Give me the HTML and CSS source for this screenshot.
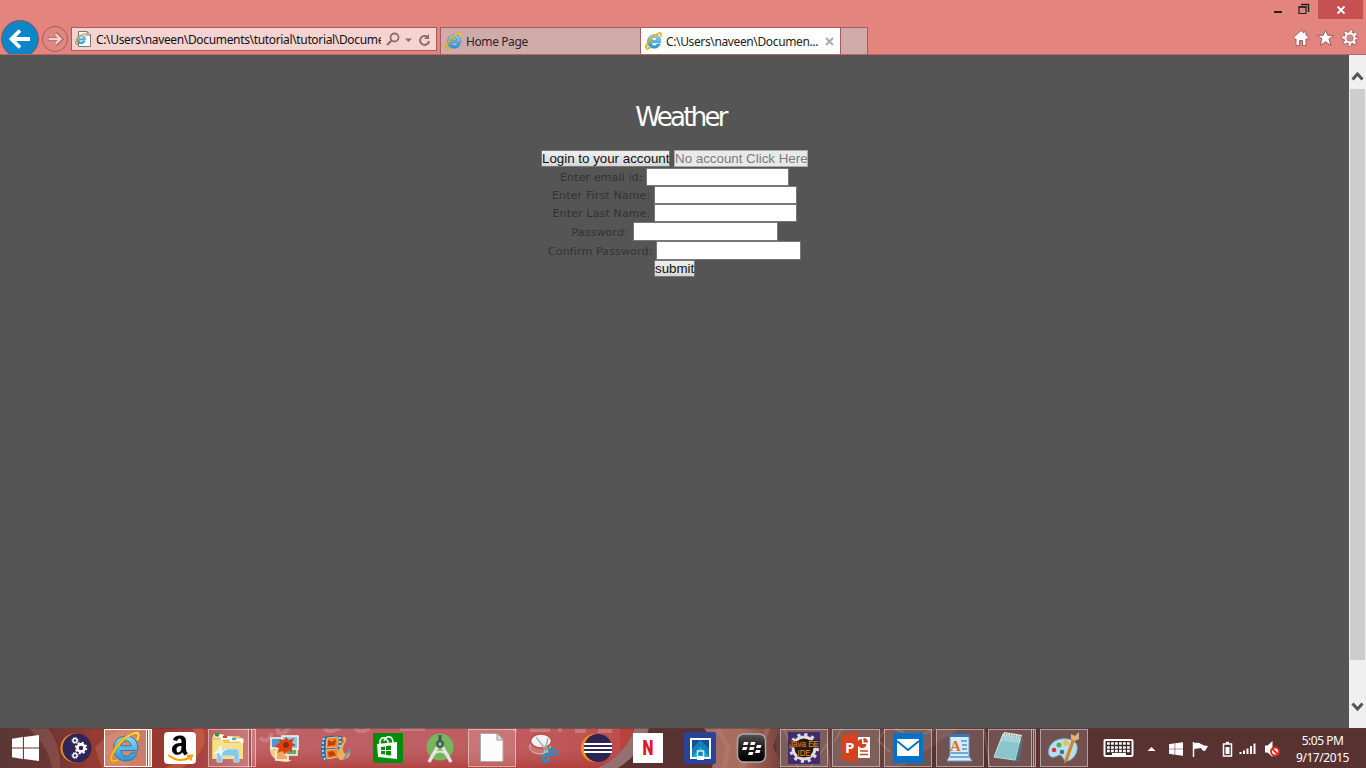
FILE: index.html
```html
<!DOCTYPE html>
<html lang="en">
<head>
<meta charset="utf-8">
<title>Weather</title>
<link rel="stylesheet" href="styles.css">
</head>
<body>
<svg class="defs" width="0" height="0" aria-hidden="true">
  <defs>
    <linearGradient id="blue" x1="0" y1="0" x2="0" y2="1"><stop offset="0" stop-color="#8fdcfa"/><stop offset="1" stop-color="#2196d8"/></linearGradient>
    <linearGradient id="yellow" x1="0" y1="0" x2="1" y2="0"><stop offset="0" stop-color="#f5b80c"/><stop offset="1" stop-color="#fbdc52"/></linearGradient>
    <symbol id="ie" viewBox="0 0 32 32">
      <path d="M27 21.500C25.500 26 22 29 16.500 29C9.500 29 4.500 24 4.500 17S9.500 5 16.500 5S28 10 28 17V19H11.500C12 22.500 14 24.500 17 24.500C19 24.500 20.500 23.500 21.300 21.500ZM11.500 14.500H21.500C21 11 19.300 9.500 16.500 9.500S12 11 11.500 14.500Z" fill="url(#blue)" stroke="#2177ac" stroke-width=".9" fill-rule="evenodd"/>
      <path d="M27 9C30 4 29 1 24.500 2.200C15 5 6 15 2.500 24C1 29.500 4 31 8.500 28" fill="none" stroke="#b98312" stroke-width="3"/>
      <path d="M27 9C30 4 29 1 24.500 2.200C15 5 6 15 2.500 24C1 29.500 4 31 8.500 28" fill="none" stroke="url(#yellow)" stroke-width="2.200"/>
    </symbol>
    <symbol id="win" viewBox="0 0 26 25"><path d="M0 3.500L10.500 2V12H0ZM11.500 1.800L26 0V12H11.500ZM0 13H10.500V23L0 21.500ZM11.500 13H26V25L11.500 23.200Z" fill="#fff"/></symbol>
  </defs>
</svg>

<header class="chrome">
  <div class="caption">
    <svg class="min" width="10" height="14"><path d="M1 12H9" stroke="#222" stroke-width="2"/></svg>
    <svg class="restore" width="12" height="12"><path d="M1 4H8V10.500H1Z" fill="none" stroke="#222" stroke-width="1.200"/><path d="M.5 4H8.500M3 1.500H10.500V9" fill="none" stroke="#222" stroke-width="1.500"/></svg>
    <span class="close"><svg width="10" height="10"><path d="M1.500 1.500L8.500 8.500M8.500 1.500L1.500 8.500" stroke="#fff" stroke-width="1.800"/></svg></span>
  </div>
  <nav class="toolbar">
    <svg class="nav" width="71" height="34">
      <circle cx="20" cy="19" r="18.500" fill="#0b87c9" stroke="#92514f"/>
      <path d="M30 19H12M20 10.500L11.500 19L20 27.500" fill="none" stroke="#fff" stroke-width="3.800"/>
      <circle cx="55" cy="19" r="12.500" fill="#e08781" stroke="#a75c5a"/>
      <path d="M48 19H60M55.500 13.500L61 19L55.500 24.500" fill="none" stroke="#a75c5a" stroke-width="4"/>
      <path d="M48.500 19H60M55.500 14L60.500 19L55.500 24" fill="none" stroke="#f5cfcc" stroke-width="2.400"/>
    </svg>
    <div class="address">
      <svg width="17" height="18"><path d="M3.500 1.500H12L15.500 5V16.500H3.500Z" fill="#fff" stroke="#777"/><path d="M12 1.500V5H15.500" fill="none" stroke="#777"/><use href="#ie" x="0" y="3" width="12" height="12"/></svg>
      <span class="url">C:\Users\naveen\Documents\tutorial\tutorial\Docume</span>
      <svg class="tools" width="50" height="22"><g fill="none" stroke="#8a6f6e"><circle cx="8.500" cy="8.500" r="4" stroke-width="1.800"/><path d="M5.500 11.500L1 16" stroke-width="2.200"/><path d="M41.500 8A4.500 4.500 0 1 0 43 12" stroke-width="2"/></g><path d="M19 9.500H26L22.500 13ZM43 5V10H38Z" fill="#8a6f6e"/></svg>
    </div>
    <div class="tabs">
      <div class="tab"><svg width="18" height="18"><use href="#ie" width="18" height="18"/></svg><span class="tab-home">Home Page</span></div>
      <div class="tab active"><svg width="18" height="18"><use href="#ie" width="18" height="18"/></svg><span class="tab-path">C:\Users\naveen\Documen...</span><svg class="x" width="9" height="9"><path d="M1 1L8 8M8 1L1 8" stroke="#aaa" stroke-width="2"/></svg></div>
      <div class="new-tab"></div>
    </div>
    <svg class="actions" width="73" height="24">
      <g stroke="#99605f" stroke-width="1" fill="#fff">
        <path d="M8 4.500L11 7V5H13V9L15.500 11.500L14.500 13H13V19.500H9.500V14.500H6.500V19.500H3V13H1.500L.5 11.500Z"/>
        <path d="M32.500 4L34.800 9.300H40.800L36 13L38 19.500L32.500 15.800L27 19.500L29 13L24.200 9.300H30.200Z"/>
      </g>
      <g fill="none"><circle cx="57" cy="12" r="6.500" stroke="#99605f" stroke-width="4" stroke-dasharray="3.100 2.005" stroke-dashoffset="1.550"/><circle cx="57" cy="12" r="5" stroke="#99605f" stroke-width="4"/><circle cx="57" cy="12" r="6.500" stroke="#fff" stroke-width="2.400" stroke-dasharray="2.300 2.805" stroke-dashoffset="1.150"/><circle cx="57" cy="12" r="4.600" stroke="#fff" stroke-width="2.200"/></g>
    </svg>
  </nav>
</header>

<div class="viewport">
  <main>
    <h1>Weather</h1>
    <form>
      <div class="row links"><button type="button" class="login">Login to your account</button><button type="button" class="signup">No account Click Here</button></div>
      <div class="row email"><label for="email">Enter email id:</label><input id="email"></div>
      <div class="row first"><label for="first">Enter First Name:</label><input id="first"></div>
      <div class="row last"><label for="last">Enter Last Name:</label><input id="last"></div>
      <div class="row pass"><label for="pass">Password:</label><input id="pass" type="password"></div>
      <div class="row confirm"><label for="confirm">Confirm Password:</label><input id="confirm" type="password"></div>
      <div class="row send"><button type="button" class="submit">submit</button></div>
    </form>
  </main>
  <aside class="scrollbar">
    <svg width="17" height="34"><path d="M3.500 24.500L8.500 19L13.500 24.500" fill="none" stroke="#555" stroke-width="3"/></svg>
    <div class="thumb"></div>
    <svg width="17" height="34"><path d="M3.500 9.500L8.500 15L13.500 9.500" fill="none" stroke="#555" stroke-width="3"/></svg>
  </aside>
</div>

<footer class="taskbar">
  <svg class="wallpaper" width="1366" height="40">
    <defs>
      <linearGradient id="wall"><stop offset="0" stop-color="#593737"/><stop offset=".035" stop-color="#6b3533"/><stop offset=".07" stop-color="#973b32"/><stop offset=".12" stop-color="#98392f"/><stop offset=".15" stop-color="#a84644"/><stop offset=".18" stop-color="#bd6060"/><stop offset=".31" stop-color="#bc5b5f"/><stop offset=".39" stop-color="#be5656"/><stop offset=".46" stop-color="#b9413b"/><stop offset=".48" stop-color="#b33931"/><stop offset="1" stop-color="#b33931"/></linearGradient>
      <linearGradient id="shade" x2="0" y2="1"><stop offset="0" stop-color="#c0666e" stop-opacity=".35"/><stop offset=".5" stop-color="#c0666e" stop-opacity=".3"/><stop offset="1" stop-color="#a8352f" stop-opacity=".6"/></linearGradient>
      <linearGradient id="skin"><stop offset="0" stop-color="#a17062"/><stop offset=".5" stop-color="#a96d5e"/><stop offset="1" stop-color="#763f39"/></linearGradient>
    </defs>
    <rect width="1366" height="40" fill="url(#wall)"/>
    <rect x="250" width="370" height="40" fill="url(#shade)"/>
    <path d="M28 0H48Q61 17 60 40H52Q48 17 28 0Z" fill="#93605b" opacity=".5"/>
    <path d="M95 20Q110 0 140 0L128 40H102Z" fill="#c27362" opacity=".4"/>
    <path d="M192 0Q208 18 165 40H182Q213 20 202 0Z" fill="#d06545" opacity=".6"/>
    <path d="M260 10Q268 17 272 5M278 0Q276 8 285 4L289 0M325 0Q326 4 332 3L340 0M355 0Q358 4 364 3L370 0M400 1H425M515 0V4M530 2H550M560 0V4M575 3H586M598 3H612" fill="none" stroke="#d49c98" stroke-width="4" opacity=".5"/>
    <path d="M646 0Q636 25 617 40H1366V0Z" fill="#573231"/>
    <path d="M635 0Q626 26 598 40H618Q642 25 649 0Z" fill="#94706e"/>
    <path d="M704 0Q718 18 712 40H782L773 18L781 0Z" fill="url(#skin)"/>
    <path d="M717 0L728 20L724 40M740 40L760 18L768 0" fill="none" stroke="#bc8673" stroke-width="5" opacity=".35"/>
    <path d="M776 0H960L900 40H776Z" fill="#714a46" opacity=".6"/>
    <path d="M784 0L798 40M810 40L827 16L830 40M842 0L835 13M886 0L878 12L890 24M894 0L914 10L937 0M984 0L990 40" fill="none" stroke="#a88077" stroke-width="2" opacity=".35"/>
    <path d="M0 .5H1366" stroke="#603f3f" opacity=".5"/>
  </svg>
  <div class="start"><svg width="27" height="26"><use href="#win" width="27" height="26"/></svg></div>

  <div class="apps">
    <div class="app"><svg width="32" height="32"><circle cx="15" cy="16" r="14.500" fill="#f08b20"/><circle cx="17" cy="16" r="14.500" fill="#302557"/><g fill="none" stroke="#fff"><circle cx="21" cy="16" r="3.600" stroke-width="2.600"/><circle cx="21" cy="16" r="5.300" stroke-width="1.800" stroke-dasharray="2.100 2.060"/><circle cx="15" cy="8.500" r="2" stroke-width="1.400"/><circle cx="15" cy="8.500" r="3" stroke-dasharray="1.200 1.160"/><circle cx="15" cy="23.500" r="2" stroke-width="1.400"/><circle cx="15" cy="23.500" r="3" stroke-dasharray="1.200 1.160"/></g></svg></div>
    <div class="app open double bright"><svg width="34" height="34"><use href="#ie" width="33" height="33"/></svg></div>
    <div class="app"><svg width="32" height="32"><rect width="32" height="32" rx="4" fill="#fff"/><path d="M9 8Q10 3.500 16 3.500T22 9V17Q22 20 24 21L21 23.500Q19.500 22.500 18.500 20.500C14 25 8 22.500 8 17.500C8 12 13 11 17.500 11V9Q17.500 6.500 15.500 6.500T13 9ZM17.500 14Q12.500 13.500 12.500 17.500T15.500 20Q17.500 19 17.500 14Z" fill="#050505" fill-rule="evenodd"/><path d="M4 23Q15 31.500 26 25.500M23 24L28 23.500L26.500 28.500" fill="none" stroke="#ffa000" stroke-width="2"/></svg></div>
    <div class="app open triple"><svg width="34" height="34"><path d="M0 7L2 3H10L12 5H27L31 8V26L27 28H0Z" fill="#e4c564"/><path d="M2 5H10V9M10 7H19V11M19 9H30V12" fill="none" stroke="#fff" stroke-width="3"/><path d="M3 4H7" stroke="#0aa339" stroke-width="3"/><path d="M11 6H15" stroke="#d44830" stroke-width="2"/><path d="M20 8H24" stroke="#47a8dc" stroke-width="2"/><path d="M1 9H10L13 12H31V28H1Z" fill="#f6e08a"/><path d="M5 31V21Q5 18 8 18H24Q27 18 27 21V31H22V25H10V31Z" fill="#8ac7e7" stroke="#b7e5f3"/><path d="M9 13L10 19L16 17L11 21L9 26L7 22L1 23L6 19Z" fill="#fff" opacity=".8"/></svg></div>
    <div class="app"><svg width="32" height="32"><path d="M2 13Q0 30 20 30L24 28Q8 29 5 12Z" fill="#f2d180"/><g fill="#f5a765" stroke="#f9f6ec" stroke-width="1.500"><path d="M3 6H16V16H3Z" fill="#4e98cc"/><path d="M8 16H20V28H8Z"/><path d="M18 15H29V23H18Z" fill="#68a85e"/><path d="M14 4H30V17H14Z" fill="#8fc6ee"/></g><path d="M9 12L12 11L11 7L16 8L18 5L21 8L26 6L24 11L28 13L24 15L24 20L20 19L17 22L14 19L10 21L11 16L7 15Z" fill="#dc4211"/><circle cx="18" cy="13" r="3" fill="#8b2b11"/></svg></div>
    <div class="app"><svg width="32" height="32"><path d="M4 5Q9 3 22 4Q20 15 21 26Q10 26 4 29Q-2 17 4 5Z" fill="#286f9f"/><path d="M7 6L18 5V15L6 16ZM6 18L18 17V25L7 27Z" fill="#f18223" stroke="#fbbb80"/><path d="M8 8L12 10L16 7L15 13L8 14ZM8 20L13 19L16 23L9 25Z" fill="#c53c0d"/><path d="M4 6Q1 17 5 28M20 5V26" fill="none" stroke="#b6e0f5" stroke-width="1.800" stroke-dasharray="2 2"/><path d="M22 6Q27 3 26 9Q21 16 24 21Q26 23 30 18Q31 25 25 27Q18 30 18 24Q18 15 24 9Z" fill="#ecae5a"/><path d="M24 27L30 18" stroke="#629ac2" stroke-width="2"/></svg></div>
    <div class="app"><svg width="30" height="30"><rect width="30" height="30" fill="#058c0c"/><path d="M4 11L24 9V26L5 24Z" fill="#fff"/><path d="M7 12V8Q8 4 12 5L15 8V11M11 8Q13 3 17 4Q20 5 20 10" fill="none" stroke="#fff" stroke-width="1.500"/><path d="M8 14L12 13.500V17H8ZM13 13L18 12.500V17H13ZM8 18H12V21.500L8 21ZM13 18H18V22.500L13 22Z" fill="#058c0c"/></svg></div>
    <div class="app"><svg width="32" height="32"><circle cx="16" cy="15" r="13.500" fill="#76b65a"/><path d="M9 23Q16 16 23 23" fill="none" stroke="#d9ead2" stroke-width="2"/><path d="M14 14L5 30M18 14L27 30" stroke="#e6e4e2" stroke-width="3.500"/><circle cx="16" cy="12" r="4" fill="#405b59"/><path d="M16 3V9" stroke="#405b59" stroke-width="3"/><circle cx="16" cy="12" r="1.800" fill="#a0bda0"/></svg></div>
    <div class="app open"><svg width="24" height="30"><path d="M.5 .5H17L23 7V28.500H.5Z" fill="#fcfcfc" stroke="#aaa"/><path d="M17 .5V7H23" fill="#ddd" stroke="#999"/></svg></div>
    <div class="app"><svg width="32" height="32"><ellipse cx="12" cy="15" rx="10.500" ry="7" fill="#c77674" stroke="#d5bbb8"/><ellipse cx="13" cy="9" rx="10.500" ry="7" fill="#f5f3f1" stroke="#c24c45" stroke-width="1.500"/><path d="M8 5L21 20L19 21ZM20 6L14 25L17 24Z" fill="#cad9dc" stroke="#849ba0" stroke-width=".7"/><g fill="none" stroke="#2790ca" stroke-width="2.300"><ellipse cx="25" cy="20" rx="4" ry="2.800" transform="rotate(30 25 20)"/><ellipse cx="18" cy="26" rx="2.800" ry="4"/></g></svg></div>
    <div class="app"><svg width="32" height="32"><circle cx="15" cy="16" r="14" fill="#f69116"/><circle cx="18" cy="16" r="14" fill="#2d2454"/><path d="M4 12H32M4 16H32M4 20H32" stroke="#fff" stroke-width="2"/></svg></div>
    <div class="app"><span class="netflix"><span>N</span></span></div>
    <div class="app"><svg width="32" height="32"><rect width="32" height="32" rx="2" fill="#2b4298"/><path d="M7 7H26V26H7Z" fill="#16509a"/><path d="M7 18L16.500 8L26 18V26H7Z" fill="#1681b8"/><path d="M7 26L16.500 15L26 26Z" fill="#0bb2da"/><path d="M7 7H26V26H7Z" fill="none" stroke="#fff" stroke-width="2"/><path d="M13.500 19H19.500V25H13.500Z" fill="#2084c1" stroke="#dce8ec" stroke-width="1.500"/><path d="M13 26H20" stroke="#fff" stroke-width="4"/></svg></div>
    <div class="app"><svg width="32" height="32"><defs><linearGradient id="black" x2="0" y2="1"><stop stop-color="#555"/><stop offset=".5" stop-color="#191919"/><stop offset="1" stop-color="#000"/></linearGradient></defs><rect x="1.500" y="2" width="28" height="28" rx="6" fill="url(#black)" stroke="#aaa" stroke-width="1.500"/><path d="M8 10H12.500L11.500 13H7ZM15 10H19.500L18.500 13H14ZM7 15H11.500L10.500 18H6ZM14 15H18.500L17.500 18H13ZM21 13H25.500L24.500 16H20ZM13 20H17.500L16.500 23H12ZM20 18H24.500L23.500 21H19Z" fill="#fff"/></svg></div>
    <div class="app open"><svg width="34" height="32"><rect x="1" width="32" height="32" fill="#432b70"/><circle cx="17" cy="16" r="11" fill="#281a13" stroke="#dedede" stroke-width="3"/><circle cx="17" cy="16" r="13.500" fill="none" stroke="#ddd" stroke-width="3" stroke-dasharray="3.200 3.860"/><g fill="#f78a1c" stroke="#281a13" stroke-width="1.500" paint-order="stroke" font-family="Liberation Sans" font-size="9.500"><text x="2" y="15" textLength="30" lengthAdjust="spacingAndGlyphs">Java EE</text><text x="10.500" y="23.500" textLength="13" lengthAdjust="spacingAndGlyphs">IDE</text></g></svg></div>
    <div class="app open"><svg width="32" height="32"><path d="M17 5H30V26H17Z" fill="#fff"/><path d="M20 19H28M20 22.500H28" stroke="#d44021" stroke-width="1.500"/><path d="M22 7A4.500 4.500 0 1 0 26.500 12H22ZM23.500 6V10.500H28A4.500 4.500 0 0 0 23.500 6" fill="#d44021"/><path d="M1 3L18 0V30L1 28Z" fill="#d64120"/><text x="5" y="21" font-family="Open Sans" font-size="15" font-weight="700" fill="#fff">P</text></svg></div>
    <div class="app open"><svg width="30" height="30"><rect width="30" height="30" fill="#0472c9"/><path d="M4 6H26V23H4Z" fill="#fff"/><path d="M4 8L15 17L26 8" fill="none" stroke="#0472c9" stroke-width="2"/></svg></div>
    <div class="app open"><svg width="26" height="30"><path d="M3 2H22V23L25 28H0L3 22Z" fill="#d7ecfb" stroke="#649bc7"/><path d="M3 2.500H22" stroke="#3579b9" stroke-width="3"/><path d="M14 8H20M15 12H20M15 16H20M4 20H21M3 24H22" stroke="#4f92ca" stroke-width="1.500"/><text x="3" y="18" font-family="Liberation Serif" font-weight="700" font-size="15" fill="#e76c13">A</text></svg></div>
    <div class="app open double"><svg width="32" height="32"><path d="M11 3L30 7L26 30L2 25Z" fill="#4f7077"/><path d="M10 2L28 4L22 28L1 25Z" fill="#a5d5d8" stroke="#d2eeee"/><path d="M8 9L27 11L22 28L1 25Z" fill="#80bcc4" opacity=".7"/><path d="M11 0L29 3L28 6L10 3Z" fill="#e2eae9"/><path d="M12 2L28 5" stroke="#888" stroke-width="2" stroke-dasharray="1 1.500"/></svg></div>
    <div class="app open"><svg width="34" height="34"><path d="M14 8C5 9 0 17 2 24Q5 28 10 25Q14 22 16 27C19 34 29 27 30 19C32 10 23 7 14 8Z" fill="#b7dff2" stroke="#7ca9be"/><circle cx="7" cy="19" r="2.300" fill="#d63830"/><circle cx="12" cy="14" r="2.500" fill="#56ae46"/><circle cx="19" cy="12" r="2.700" fill="#f0c13c"/><circle cx="15" cy="21" r="2.300" fill="#536f86"/><path d="M28 9L21 29L17 33L18 27L25 8Z" fill="#d4862d"/><path d="M24 3L28 5L32 1L32 8L28 10L24 8Z" fill="#e0b276"/></svg></div>
  </div>

  <div class="tray">
    <svg class="tray-icons" width="190" height="40">
      <rect x="14.500" y="12" width="28" height="16" rx="1" fill="#3e2424" stroke="#fff" stroke-width="2"/><path d="M17 15.500H40M17 19.500H40M17 23H40" stroke="#fff" stroke-width="2.500" stroke-dasharray="2.800 1.200"/><path d="M22 26H36" stroke="#fff" stroke-width="2"/>
      <path d="M57.500 23L61.500 19L65.500 23Z" fill="#fff"/>
      <use href="#win" x="79" y="13.500" width="14" height="15"/>
      <path d="M103.500 14V29" stroke="#fff" stroke-width="1.500"/><path d="M104 15Q109 14 111 16Q114 18 118 18L115 23Q112 23 111 20L104 21Z" fill="#fff"/>
      <path d="M133.500 16V28H141.500V16ZM136 14.500H139" fill="none" stroke="#fff" stroke-width="1.500"/><path d="M135.500 19H139.500V26H135.500Z" fill="#fff"/>
      <path d="M152 26V24M155.500 26V22.500M159 26V20.500M162.500 26V18M166 26V15.500" transform="translate(-1.500 0)" stroke="#fff" stroke-width="2"/>
      <path d="M175 17.500H177.500L182.500 13V29L177.500 24.500H175Z" fill="#fff"/><circle cx="185" cy="23.500" r="4" fill="#fff" stroke="#e32922" stroke-width="2"/><path d="M182 20.500L188 26.500" stroke="#e32922" stroke-width="2"/>
    </svg>
    <div class="clock"><span class="time">5:05 PM</span><span class="date">9/17/2015</span></div>
  </div>
</footer>
</body>
</html>
```
FILE: styles.css
```css
* { box-sizing: border-box; }
body { margin: 0; width: 1366px; height: 768px; overflow: hidden; display: flex; flex-direction: column; background: #555; font-family: "Noto Sans", "Open Sans", sans-serif; }
svg { display: block; flex: none; }
.defs { position: absolute; }

.chrome { height: 55px; flex: none; background: #e3847e; border-bottom: 1px solid #b86661; display: flex; flex-direction: column; }
.caption { height: 20px; display: flex; justify-content: flex-end; align-items: flex-start; }
.min { margin-right: 15px; }
.restore { margin: 3px 8px 0 0; }
.close { width: 45px; height: 19px; margin-right: 3px; background: #c75050; display: flex; align-items: center; justify-content: center; }
.toolbar { height: 34px; display: flex; }
.address { width: 366px; height: 24px; margin-top: 7px; border: 1px solid #a75c5a; background: #f5d3d1; display: flex; align-items: center; padding-left: 3px; }
.url { width: 285px; margin-left: 4px; padding-top: 2px; overflow: hidden; white-space: nowrap; color: #111; font: 12px/20px "Noto Sans"; letter-spacing: -.34px; }
.tools { margin: 2px 0 0 5px; }
.tabs { display: flex; margin: 7px 0 0 3px; height: 27px; border: 1px solid #a75c5a; border-bottom: 0; width: 428px; }
.tab { width: 199px; flex: none; background: #d1abaa; display: flex; align-items: center; padding-left: 4px; font-size: 12px; line-height: 20px; color: #2e2424; white-space: nowrap; }
.tab span { margin-left: 3px; padding-top: 2px; }
.tab.active { background: #fff; border: solid #a75c5a; border-width: 0 1px; width: 201px; color: #222; }
.tab .tab-home { letter-spacing: -.4px; }
.tab .tab-path { width: 153px; letter-spacing: -.37px; }
.x { margin-left: 6px; }
.new-tab { flex: 1; background: #d1abaa; }
.actions { margin: 6px 0 0 auto; }

.viewport { flex: 1; min-height: 0; display: flex; }
main { width: 1349px; background: #555; }
h1 { margin: 43px 0 0; height: 52px; padding-left: 12px; text-align: center; color: #fff; font: 26px/38px "DejaVu Sans"; letter-spacing: -2.7px; }
.row { display: flex; justify-content: center; height: 18px; }
.row.pass, .row.confirm { height: 19px; }
label { color: #333; font: 11px/19px "DejaVu Sans"; letter-spacing: .15px; white-space: nowrap; margin-right: 4px; }
.row.pass label, .row.confirm label { line-height: 21px; }
input { appearance: none; margin: 0; padding: 0; border: 1px solid #777; border-radius: 0; background: #fff; height: 18px; width: 143px; }
.pass input, .confirm input { height: 19px; width: 145px; }
button { appearance: none; height: 17px; margin: 0; padding: 0; border: 1px solid #777; background: linear-gradient(#f0f0f0, #d6d6d6); color: #111; font: 13.333px/15px "Liberation Sans"; white-space: nowrap; }
.links { gap: 4px; }
.login { width: 129px; }
.signup { width: 134px; color: #7b7b7b; border-color: #aaa; background: #e9e9e9; }
.submit { width: 41px; }
.email label { width: 82px; }
.first label { width: 98px; }
.last label { width: 97px; }
.pass label { width: 57px; }
.confirm label { width: 104px; }
.scrollbar { width: 17px; background: #f0f0f0; }
.thumb { height: 571px; width: 15px; margin-left: 1px; background: #cdcdcd; }
.scrollbar svg:last-child { margin-top: 34px; }

.taskbar { position: relative; height: 40px; flex: none; display: flex; background: #573231; }
.wallpaper { position: absolute; inset: 0; }
.start, .apps, .tray { position: relative; display: flex; }
.start { width: 50px; align-items: center; justify-content: center; }
.app { width: 52px; height: 40px; display: flex; align-items: center; justify-content: center; }
.app.open { width: 48px; margin: 1px 2px; height: 38px; background: #ffffff28; border: 1px solid #ffffff70; }
.app.double, .app.triple { justify-content: flex-start; padding-left: 4px; background: linear-gradient(90deg, transparent 42px, #ffffff80 42px 43px, #55222260 43px 44px, #ffffff80 44px 45px, transparent 45px), #ffffff28; }
.app.triple { padding-left: 3px; background: linear-gradient(90deg, transparent 39px, #ffffff80 39px 40px, #55222260 40px 42px, #ffffff80 42px 43px, transparent 43px), #ffffff28; }
.app.open.bright { border-color: #fff; background: linear-gradient(90deg, #f6ba9e88 41px, #fff 41px 42px, #9c4239 42px 43px, #fff 43px 44px, #e3b2a3 44px); }
.netflix { width: 30px; height: 30px; background: #fff; color: #e51520; text-align: center; font: 900 20px/30px Roboto, sans-serif; }
.netflix span { display: block; transform: scaleX(.78); }
.tray { margin-left: auto; width: 276px; }
.clock { width: 86px; padding: 4px 1px 0 0; color: #fff; display: flex; flex-direction: column; align-items: center; white-space: nowrap; font: 12px/17px "Noto Sans"; letter-spacing: -.5px; }
.date { letter-spacing: -.45px; }
```
